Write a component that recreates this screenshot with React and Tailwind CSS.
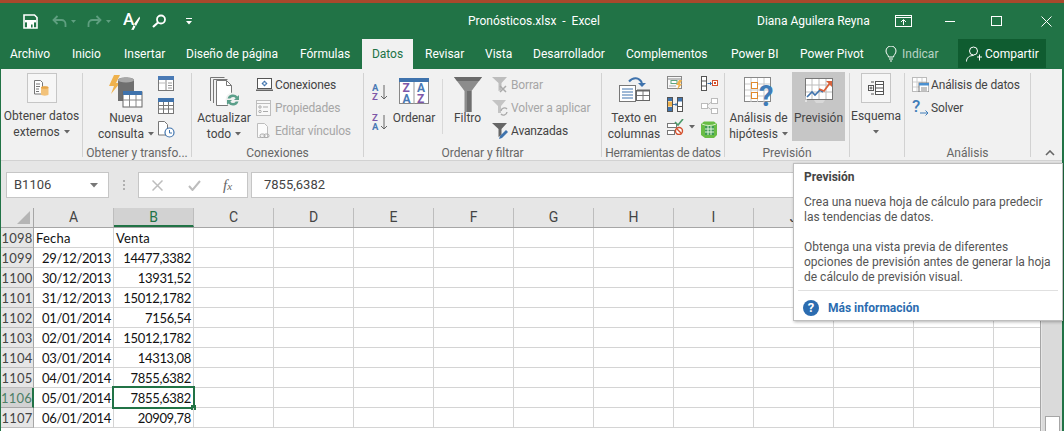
import React from 'react';

const UI = "font-['Roboto',sans-serif]";
const CELL = "font-['Lato',sans-serif]";

function Caret({ className = '' }) {
  return (
    <svg width="6" height="4" viewBox="0 0 6 4" className={`inline-block ${className}`}>
      <path d="M0 0h6L3 3.5z" fill="#666" />
    </svg>
  );
}

/* ---------- title bar icons ---------- */
function SaveIcon() {
  return (
    <svg width="15" height="15" viewBox="0 0 15 15">
      <path d="M1 1h10.5L14 3.5V14H1z" fill="none" stroke="#fff" strokeWidth="1.6" />
      <rect x="2" y="6" width="11" height="2.4" fill="#fff" />
      <rect x="4" y="8" width="7" height="6" fill="#fff" />
      <rect x="8" y="10.5" width="1.6" height="3" fill="#217346" />
    </svg>
  );
}
function UndoIcon({ flip }) {
  return (
    <svg width="15" height="13" viewBox="0 0 15 13" className={flip ? '-scale-x-100' : ''}>
      <path d="M5.5 1 1.5 5l4 4M2 5h7.5a4 4 0 0 1 4 4v3" fill="none" stroke="#5f9f80" strokeWidth="1.8" />
    </svg>
  );
}
function FormatIcon() {
  return (
    <svg width="18" height="20" viewBox="0 0 18 20">
      <text x="0" y="14" fontSize="17" fontWeight="500" fill="#fff" fontFamily="Roboto, sans-serif">A</text>
      <path d="M16.5 5.5 11 13l2 2 4-7.5zM10.5 14l2 1.5-2 3.5-2.5-.5c1.5-1 1.5-2.5 2.5-4.5z" fill="#fff" />
    </svg>
  );
}
function SearchIcon() {
  return (
    <svg width="15" height="14" viewBox="0 0 15 14">
      <circle cx="9" cy="5.5" r="4" fill="none" stroke="#fff" strokeWidth="1.8" />
      <path d="M6 8.5 1 13" stroke="#fff" strokeWidth="2.2" />
    </svg>
  );
}
function CustomizeIcon() {
  return (
    <svg width="6" height="7" viewBox="0 0 6 7">
      <path d="M0 .5h6" stroke="#fff" />
      <path d="M0 3h6L3 6.5z" fill="#fff" />
    </svg>
  );
}
function WindowIcons() {
  return (
    <>
      <svg width="17" height="12" viewBox="0 0 17 12" className="ml-[26px]">
        <rect x=".5" y=".5" width="16" height="11" fill="none" stroke="#fff" />
        <path d="M0 2.5h17" stroke="#fff" />
        <path d="M8.5 10V5M6 7l2.5-2.5L11 7" fill="none" stroke="#fff" />
      </svg>
      <div className="ml-[33px] w-[10px] h-[1px] bg-white" />
      <div className="ml-[36px] w-[11px] h-[10px] border border-white" />
      <svg width="11" height="11" viewBox="0 0 11 11" className="ml-[39px]">
        <path d="M.5.5l10 10M10.5.5l-10 10" stroke="#fff" fill="none" />
      </svg>
    </>
  );
}

/* ---------- ribbon icons ---------- */
function OpenDataIcon() {
  return (
    <svg width="15" height="16" viewBox="0 0 15 16">
      <path d="M.5.5h6l2 2V14H.5z" fill="#fff" stroke="#777" />
      <path d="M2 4h4M2 6.5h4M2 9h3M2 11.5h3" stroke="#777" />
      <path d="M7 7.5c0-1.5 7.5-1.5 7.5 0v7c0 1.5-7.5 1.5-7.5 0z" fill="#f2c27a" />
      <ellipse cx="10.75" cy="7.5" rx="3.75" ry="1.3" fill="#e6a64a" />
    </svg>
  );
}
function QueryIcon() {
  return (
    <svg width="34" height="33" viewBox="0 0 34 33">
      <path d="M5 0h6L7 8h4L2 19l3-8H0z" fill="#efb24d" />
      <path d="M9 5c0-3.5 16-3.5 16 0v21H9z" fill="#6f6f6f" />
      <ellipse cx="17" cy="5" rx="8" ry="2.6" fill="#a8a8a8" />
      <rect x="14" y="17" width="19" height="15" fill="#fff" stroke="#666" />
      <rect x="14" y="16" width="19" height="4" fill="#3f73ad" />
      <path d="M20.5 20v12M27 20v12M14 25h19" stroke="#888" />
    </svg>
  );
}
function TableA() {
  return (
    <svg width="16" height="15" viewBox="0 0 16 15">
      <rect x=".5" y=".5" width="15" height="14" fill="#fff" stroke="#777" />
      <rect x="0" y="0" width="16" height="4" fill="#4a7ab5" />
      <path d="M8 4v10" stroke="#888" />
      <path d="M10 7h4M10 9.5h4M10 12h4" stroke="#999" />
      <path d="M1 7h6" stroke="#bbb" />
    </svg>
  );
}
function TableB() {
  return (
    <svg width="16" height="16" viewBox="0 0 16 16">
      <rect x=".5" y=".5" width="15" height="15" fill="#fff" stroke="#777" />
      <rect x="0" y="0" width="16" height="4" fill="#3f73ad" />
      <path d="M5.5 4v11M10.5 4v11M1 7.5h14M1 11h14" stroke="#777" />
    </svg>
  );
}
function RecentIcon() {
  return (
    <svg width="17" height="17" viewBox="0 0 17 17">
      <path d="M.5.5h6l3 3V14H.5z" fill="#fff" stroke="#777" />
      <circle cx="11.5" cy="11.5" r="4.5" fill="#fff" stroke="#3f73ad" strokeWidth="1.2" />
      <path d="M11.5 9v3h2.5" fill="none" stroke="#3f73ad" />
    </svg>
  );
}
function RefreshAllIcon() {
  return (
    <svg width="31" height="31" viewBox="0 0 31 31">
      <path d="M.5 24V.5h14" fill="none" stroke="#777" />
      <path d="M3.5 26V2.5h14" fill="none" stroke="#777" />
      <path d="M6.5 28.5v-25h10l5 5v20z" fill="#fff" stroke="#777" />
      <path d="M16.5 3.5v5h5" fill="none" stroke="#777" />
      <circle cx="23" cy="23" r="7.5" fill="#f1f1f1" />
      <path d="M17.5 21.5a5.8 5.8 0 0 1 10-2l1.5-1.5v5h-5l1.7-1.7a3.2 3.2 0 0 0-5.4.2zM28.5 24.5a5.8 5.8 0 0 1-10 2l-1.5 1.5v-5h5l-1.7 1.7a3.2 3.2 0 0 0 5.4-.2z" fill="#5b9f8a" />
    </svg>
  );
}
function ConnIcon() {
  return (
    <svg width="17" height="14" viewBox="0 0 17 14">
      <rect x="1.5" y=".5" width="14" height="10" fill="#fff" stroke="#555" />
      <path d="M0 11.5h17v1.5H0z" fill="#666" />
      <path d="M8.5 2.5l3 3-3 3-3-3z" fill="#3f73ad" />
      <rect x="7.5" y="4.5" width="2" height="2" fill="#fff" />
    </svg>
  );
}
function PropsIcon() {
  return (
    <svg width="15" height="16" viewBox="0 0 15 16">
      <rect x=".5" y=".5" width="14" height="15" fill="#f8f8f8" stroke="#bdbdbd" />
      <path d="M1 3.5h13" stroke="#bdbdbd" />
      <circle cx="4" cy="7" r="1.2" fill="none" stroke="#aaa" />
      <circle cx="4" cy="11.5" r="1.2" fill="none" stroke="#aaa" />
      <path d="M7 7h5M7 11.5h5" stroke="#aaa" />
    </svg>
  );
}
function LinksIcon() {
  return (
    <svg width="15" height="16" viewBox="0 0 15 16">
      <path d="M1.5.5h7l3 3v11h-10z" fill="#fbfbfb" stroke="#bdbdbd" />
      <rect x="4" y="11" width="5" height="3.5" rx="1.7" fill="#f1f1f1" stroke="#aaa" />
      <rect x="8" y="11" width="5" height="3.5" rx="1.7" fill="none" stroke="#aaa" />
    </svg>
  );
}
function SortAZ({ down }) {
  const top = down ? 'Z' : 'A';
  const bottom = down ? 'A' : 'Z';
  return (
    <svg width="16" height="18" viewBox="0 0 16 18">
      <text x="0" y="8" fontSize="9.5" fontWeight="700" fontFamily="Roboto, sans-serif" fill={down ? '#7e57a8' : '#4a7ab5'}>{top}</text>
      <text x="0" y="17" fontSize="9.5" fontWeight="700" fontFamily="Roboto, sans-serif" fill={down ? '#4a7ab5' : '#7e57a8'}>{bottom}</text>
      <path d="M12 2v14M9 13l3 3 3-3" fill="none" stroke="#666" />
    </svg>
  );
}
function SortBigIcon() {
  const t = { fontSize: 12, fontWeight: 700, fontFamily: 'Roboto, sans-serif' };
  return (
    <svg width="30" height="26" viewBox="0 0 30 26">
      <rect x=".5" y=".5" width="29" height="25" fill="#fff" stroke="#888" />
      <rect x="0" y="0" width="30" height="4" fill="#3f73ad" />
      <path d="M15 4v22" stroke="#999" />
      <text x="3.5" y="14" {...t} fill="#7e57a8">Z</text>
      <text x="3.5" y="24.5" {...t} fill="#4a7ab5">A</text>
      <text x="18" y="14" {...t} fill="#4a7ab5">A</text>
      <text x="18" y="24.5" {...t} fill="#7e57a8">Z</text>
    </svg>
  );
}
function FunnelBig() {
  return (
    <svg width="28" height="36" viewBox="0 0 28 36">
      <path d="M0 0h28L17.5 14v21h-7V14z" fill="#8c8c8c" />
      <path d="M0 0h28l-3 4H3z" fill="#6b6b6b" />
      <path d="M13 14v21h4.5V14z" fill="#6e6e6e" />
    </svg>
  );
}
function ClearFilterIcon() {
  return (
    <svg width="16" height="16" viewBox="0 0 16 16">
      <path d="M0 0h15L9.5 6v7l-3 1V6z" fill="#bdbdbd" />
      <path d="M8 9l6 6M14 9l-6 6" stroke="#aaa" strokeWidth="1.5" />
    </svg>
  );
}
function ReapplyIcon() {
  return (
    <svg width="16" height="16" viewBox="0 0 16 16">
      <path d="M0 0h14L9 6v7H6V6z" fill="#c4c4c4" />
      <path d="M9 11a3.5 3.5 0 0 1 6-2M15 12a3.5 3.5 0 0 1-6 2" fill="none" stroke="#aaa" strokeWidth="1.4" />
    </svg>
  );
}
function AdvancedIcon() {
  return (
    <svg width="16" height="16" viewBox="0 0 16 16">
      <path d="M0 0h15L9.5 6v6l-3 2V6z" fill="#666" />
      <path d="M14 7l2 2-6 6-3 1 1-3z" fill="#3f73ad" />
    </svg>
  );
}
function TextColsIcon() {
  return (
    <svg width="31" height="25" viewBox="0 0 31 25">
      <rect x=".5" y="8.5" width="16" height="16" fill="#fff" stroke="#777" />
      <path d="M3 12h11M3 15h11M3 18h11M3 21h11" stroke="#3f73ad" />
      <rect x="17.5" y="13.5" width="13" height="10" fill="#fff" stroke="#666" />
      <path d="M18 13.5h13" stroke="#666" strokeWidth="2" />
      <path d="M24 14v9M18 18.5h12" stroke="#777" />
      <path d="M10 4.5C14 0 20 0 23 6" fill="none" stroke="#3f73ad" strokeWidth="2" />
      <path d="M19 6h8l-4 4z" fill="#3f73ad" />
    </svg>
  );
}
function FlashIcon() {
  return (
    <svg width="16" height="14" viewBox="0 0 16 14">
      <rect x=".5" y=".5" width="14" height="12" fill="#f8f8f8" stroke="#888" />
      <path d="M1 3h13" stroke="#888" />
      <rect x="4" y="4.5" width="6" height="3" fill="#fff" stroke="#5fa57e" />
      <path d="M2 10h7" stroke="#aaa" />
      <path d="M12 4h3l-2 4h2l-5 6 1.5-5H9z" fill="#efb24d" />
    </svg>
  );
}
function DupesIcon() {
  return (
    <svg width="16" height="15" viewBox="0 0 16 15">
      <rect x=".5" y=".5" width="5" height="14" fill="#fff" stroke="#555" />
      <rect x="10.5" y=".5" width="5" height="14" fill="#fff" stroke="#555" />
      <rect x="1" y="1" width="4" height="3" fill="#3f73ad" />
      <rect x="1" y="4.5" width="4" height="5" fill="#efb24d" />
      <rect x="1" y="10" width="4" height="4" fill="#3f73ad" />
      <rect x="11" y="1" width="4" height="3.5" fill="#3f73ad" />
      <path d="M11 9.5h4" stroke="#555" />
      <path d="M6 7.5h4M8.5 6l1.5 1.5L8.5 9" fill="none" stroke="#3f73ad" />
    </svg>
  );
}
function ValidateIcon() {
  return (
    <svg width="17" height="16" viewBox="0 0 17 16">
      <rect x=".5" y="4.5" width="9" height="4" fill="#fff" stroke="#777" />
      <rect x=".5" y="11.5" width="7" height="4" fill="#fff" stroke="#777" />
      <path d="M8 3l3 3 5-6" fill="none" stroke="#4d9a6a" strokeWidth="1.6" />
      <circle cx="12" cy="12" r="3.5" fill="#fff" stroke="#d3502d" strokeWidth="1.4" />
      <path d="M9.8 9.8l4.4 4.4" stroke="#d3502d" strokeWidth="1.4" />
    </svg>
  );
}
function ConsolidateIcon() {
  return (
    <svg width="17" height="15" viewBox="0 0 17 15">
      <rect x=".5" y=".5" width="5" height="14" fill="#fff" stroke="#555" />
      <path d="M1 5h4M1 10h4" stroke="#555" />
      <path d="M6.5 7.5h4M9 6l1.5 1.5L9 9" fill="none" stroke="#3f73ad" />
      <rect x="11.5" y="4.5" width="5" height="5" fill="#fff" stroke="#d3502d" />
      <rect x="13" y="6" width="2" height="2" fill="#d3502d" />
    </svg>
  );
}
function RelationsIcon() {
  return (
    <svg width="17" height="16" viewBox="0 0 17 16">
      <rect x="10.5" y=".5" width="6" height="5" fill="#fff" stroke="#bbb" />
      <rect x=".5" y="5.5" width="6" height="5" fill="#fff" stroke="#bbb" />
      <rect x="10.5" y="10.5" width="6" height="5" fill="#fff" stroke="#bbb" />
      <path d="M6.5 7l4-3M6.5 9l4 3" stroke="#bbb" />
    </svg>
  );
}
function DataModelIcon() {
  return (
    <svg width="16" height="17" viewBox="0 0 16 17">
      <path d="M3 .5h10l3 2.5v11l-3 3H4l-4-3V3z" fill="#69bd45" />
      <path d="M1 3c4 2 10 2 14 0" fill="none" stroke="#d5efc9" />
      <rect x="4" y="5" width="9" height="9" fill="#3f9c55" />
      <path d="M7 5v9M10 5v9M4 8h9M4 11h9" stroke="#e4f5dc" />
    </svg>
  );
}
function WhatIfIcon() {
  return (
    <svg width="31" height="31" viewBox="0 0 31 31">
      <rect x=".5" y=".5" width="26" height="24" fill="#fff" stroke="#888" />
      <path d="M7 1v24M13.5 1v24M20 1v24M1 7h25M1 13h25M1 19h25" stroke="#c9c9c9" />
      <rect x="7.5" y="5.5" width="6" height="6" fill="#fff" stroke="#e08a2e" />
      <rect x="7.5" y="15.5" width="6" height="6" fill="#fff" stroke="#e08a2e" />
      <text x="15" y="28.5" fontSize="29" fontWeight="700" fontFamily="Roboto, sans-serif" fill="#3f7cb8">?</text>
    </svg>
  );
}
function ForecastIcon() {
  return (
    <svg width="28" height="26" viewBox="0 0 28 26">
      <rect x=".5" y=".5" width="27" height="21" fill="#fff" stroke="#777" />
      <path d="M7 1v20M14 1v20M21 1v20M1 7h26M1 14h26" stroke="#bdbdbd" />
      <path d="M1 24v-6" stroke="#fff" />
      <path d="M2 19l5-5 3 3 5-5 3 2" fill="none" stroke="#3f73ad" strokeWidth="1.6" />
      <path d="M14 11l5 2 6-8" fill="none" stroke="#d9623b" strokeWidth="1.8" />
      <path d="M21 3h6v6z" fill="#d9623b" />
      <path d="M9 22l2 3h7l2-3z" fill="#d8d8d8" />
    </svg>
  );
}
function OutlineIcon() {
  return (
    <svg width="16" height="14" viewBox="0 0 16 14">
      <rect x=".5" y="4.5" width="5" height="5" fill="#fff" stroke="#555" />
      <path d="M1.5 7h3M3 5.5v3" stroke="#555" />
      <rect x="7.5" y=".5" width="8" height="13" fill="#fff" stroke="#555" />
      <path d="M7 3.5h8M7 7h8M7 10.5h8" stroke="#555" />
      <path d="M3 1h3M3 13h3" stroke="#555" />
    </svg>
  );
}
function DataAnalysisIcon() {
  return (
    <svg width="17" height="15" viewBox="0 0 17 15">
      <rect x=".5" y=".5" width="14" height="14" fill="#fff" stroke="#bbb" />
      <path d="M5 1v13M10 1v13M1 5h13M1 10h13" stroke="#cfcfcf" />
      <rect x="7" y="6" width="10" height="9" fill="#fff" stroke="#777" />
      <rect x="7" y="6" width="10" height="2.5" fill="#4a90d0" />
      <path d="M9 11h6M9 13h6" stroke="#888" />
    </svg>
  );
}
function SolverIcon() {
  return (
    <svg width="17" height="17" viewBox="0 0 17 17">
      <text x="0" y="13" fontSize="17" fontWeight="500" fontFamily="Roboto, sans-serif" fill="#3f7cb8">?</text>
      <path d="M8 14h8M13.5 11.5 16 14l-2.5 2.5" fill="none" stroke="#3f7cb8" />
    </svg>
  );
}

/* ---------- ribbon pieces ---------- */
function Group({ w, label, children }) {
  return (
    <div className={`${w} h-[84px] flex flex-col border-r border-[#d2d2d2]`}>
      <div className="h-[74px] flex">{children}</div>
      <div className="h-[10px] leading-[12px] text-center text-[12px] text-[#666] whitespace-nowrap">{label}</div>
    </div>
  );
}
function SmallRow({ icon, label, muted }) {
  return (
    <div className="h-[23px] flex items-center tracking-[-0.15px] whitespace-nowrap">
      <div className="w-[19px] flex items-center">{icon}</div>
      <span className={muted ? 'text-[#a6a6a6]' : 'text-[#444]'}>{label}</span>
    </div>
  );
}
function TwoLines({ a, b, caret }) {
  return (
    <div className="leading-[16px] text-center text-[#444] whitespace-nowrap">
      <div>{a}</div>
      <div>{b}{caret && <Caret className="ml-[4px] mb-[2px]" />}</div>
    </div>
  );
}
function BoxedIcon({ children }) {
  return (
    <div className="w-[30px] h-[30px] flex items-center justify-center border border-[#c6c6c6] bg-[#f6f6f6]">
      {children}
    </div>
  );
}

function Ribbon() {
  return (
    <div className={`${UI} text-[12px] h-[92px] pt-[4px] flex bg-[#f1f1f1] border-b border-[#d2d2d2]`}>
      <Group w="w-[82px]" label="">
        <div className="w-full flex flex-col items-center">
          <BoxedIcon><OpenDataIcon /></BoxedIcon>
          <div className="mt-[5px]"><TwoLines a="Obtener datos" b="externos" caret /></div>
        </div>
      </Group>

      <Group w="w-[109px]" label="Obtener y transfo...">
        <div className="w-[72px] ml-[7px] flex flex-col items-center">
          <div className="h-[37px] pt-[2px]"><QueryIcon /></div>
          <TwoLines a="Nueva" b="consulta" caret />
        </div>
        <div className="ml-[-4px] pt-[3px] flex flex-col gap-[7px]">
          <TableA /><TableB /><RecentIcon />
        </div>
      </Group>

      <Group w="w-[172px]" label="Conexiones">
        <div className="w-[60px] ml-[2px] flex flex-col items-center">
          <div className="h-[37px] pt-[4px] pl-[2px]"><RefreshAllIcon /></div>
          <TwoLines a="Actualizar" b="todo" caret />
        </div>
        <div className="ml-[2px]">
          <SmallRow icon={<ConnIcon />} label="Conexiones" />
          <SmallRow icon={<PropsIcon />} label="Propiedades" muted />
          <SmallRow icon={<LinksIcon />} label="Editar vínculos" muted />
        </div>
      </Group>

      <Group w="w-[238px]" label="Ordenar y filtrar">
        <div className="w-[25px] pl-[8px] pt-[10px] flex flex-col gap-[12px]">
          <SortAZ /><SortAZ down />
        </div>
        <div className="w-[50px] flex flex-col items-center">
          <div className="h-[37px] pt-[5px]"><SortBigIcon /></div>
          <div className="leading-[16px] text-[#444]">Ordenar</div>
        </div>
        <div className="ml-[3px] mt-[6px] h-[55px] w-[1px] bg-[#d8d8d8]" />
        <div className="w-[49px] flex flex-col items-center">
          <div className="h-[37px] pt-[4px]"><FunnelBig /></div>
          <div className="leading-[16px] text-[#444]">Filtro</div>
        </div>
        <div>
          <SmallRow icon={<ClearFilterIcon />} label="Borrar" muted />
          <SmallRow icon={<ReapplyIcon />} label="Volver a aplicar" muted />
          <SmallRow icon={<AdvancedIcon />} label="Avanzadas" />
        </div>
      </Group>

      <Group w="w-[123px]" label={<span className="tracking-[-0.3px]">Herramientas de datos</span>}>
        <div className="w-[62px] ml-[1px] flex flex-col items-center">
          <div className="h-[37px] pt-[4px]"><TextColsIcon /></div>
          <TwoLines a="Texto en" b="columnas" />
        </div>
        <div className="pl-[2px] pt-[3px] flex flex-col gap-[7px]">
          <FlashIcon /><DupesIcon />
          <div className="flex items-center"><ValidateIcon /><Caret className="ml-[5px]" /></div>
        </div>
        <div className="pl-[6px] pt-[3px] flex flex-col gap-[7px]">
          <ConsolidateIcon /><RelationsIcon /><DataModelIcon />
        </div>
      </Group>

      <Group w="w-[125px]" label="Previsión">
        <div className="w-[67px] flex flex-col items-center">
          <div className="h-[37px] pt-[4px] pl-[2px]"><WhatIfIcon /></div>
          <TwoLines a="Análisis de" b="hipótesis" caret />
        </div>
        <div className="w-[53px] h-[69px] -mt-[1px] flex flex-col items-center bg-[#c6c6c6]">
          <div className="h-[38px] pt-[6px]"><ForecastIcon /></div>
          <div className="leading-[16px] text-[#444]">Previsión</div>
        </div>
      </Group>

      <Group w="w-[55px]" label="">
        <div className="w-full pr-[2px] flex flex-col items-center">
          <BoxedIcon><OutlineIcon /></BoxedIcon>
          <div className="mt-[5px] leading-[16px] text-[#444]">Esquema</div>
          <Caret className="mt-[6px]" />
        </div>
      </Group>

      <Group w="w-[126px]" label="Análisis">
        <div className="pl-[7px]">
          <SmallRow icon={<DataAnalysisIcon />} label="Análisis de datos" />
          <SmallRow icon={<SolverIcon />} label="Solver" />
        </div>
      </Group>

      <div className="flex-1 h-[84px] flex items-end justify-center">
        <svg width="10" height="6" viewBox="0 0 10 6" className="ml-[6px] mb-[1px]">
          <path d="M1 5l4-4 4 4" fill="none" stroke="#666" strokeWidth="1.6" />
        </svg>
      </div>
    </div>
  );
}

function TitleBar() {
  return (
    <div className={`${UI} relative h-[36px] flex items-center text-[12px] text-white bg-[#217346]`}>
      <div className="pl-[22px]"><SaveIcon /></div>
      <div className="ml-[14px]"><UndoIcon /></div>
      <svg width="5" height="3" className="ml-[4px]"><path d="M0 0h5L2.5 3z" fill="#5f9f80" /></svg>
      <div className="ml-[11px]"><UndoIcon flip /></div>
      <svg width="5" height="3" className="ml-[4px]"><path d="M0 0h5L2.5 3z" fill="#5f9f80" /></svg>
      <div className="ml-[12px]"><FormatIcon /></div>
      <div className="ml-[11px]"><SearchIcon /></div>
      <div className="ml-[19px]"><CustomizeIcon /></div>
      <div className="ml-[276px] w-[127px] whitespace-nowrap">Pronósticos.xlsx&nbsp; -&nbsp; Excel</div>
      <div className="ml-[162px] w-[112px] whitespace-nowrap">Diana Aguilera Reyna</div>
      <WindowIcons />
    </div>
  );
}

const TABS = [
  ['Archivo', 'w-[71px] pl-[9px]'],
  ['Inicio', 'w-[52px]'],
  ['Insertar', 'w-[62px]'],
  ['Diseño de página', 'w-[114px]'],
  ['Fórmulas', 'w-[62px]'],
];
const TABS2 = [
  ['Revisar', 'w-[60px]'],
  ['Vista', 'w-[48px]'],
  ['Desarrollador', 'w-[93px]'],
  ['Complementos', 'w-[105px]'],
  ['Power BI', 'w-[69px]'],
  ['Power Pivot', 'w-[85px]'],
];

function TabBar() {
  return (
    <div className={`${UI} h-[30px] flex text-[12px] text-white bg-[#217346]`}>
      {TABS.map(([t, w]) => (
        <div key={t} className={`${w} leading-[30px] whitespace-nowrap`}>{t}</div>
      ))}
      <div className="w-[51px] h-[30px] bg-[#f1f1f1] text-[#217346] text-center leading-[30px]">Datos</div>
      <div className="w-[12px]" />
      {TABS2.map(([t, w]) => (
        <div key={t} className={`${w} leading-[30px] whitespace-nowrap`}>{t}</div>
      ))}
      <div className="w-[73px] flex items-center text-[#b9d3c5]">
        <svg width="12" height="16" viewBox="0 0 12 16" className="mr-[5px]">
          <path d="M3.5 11c0-2-2.5-3-2.5-6a5 5 0 0 1 10 0c0 3-2.5 4-2.5 6zM4 13h4M5 15h2" fill="none" stroke="#fff" />
        </svg>
        Indicar
      </div>
      <div className="w-[88px] h-[29px] bg-[#0f5c30] flex items-center pl-[8px]">
        <svg width="16" height="16" viewBox="0 0 16 16" className="mr-[3px]">
          <circle cx="7.5" cy="5" r="4" fill="none" stroke="#fff" />
          <path d="M.5 15.5c0-4 3-6 7-6M11 11h5M13.5 8.5v6" fill="none" stroke="#fff" />
        </svg>
        Compartir
      </div>
    </div>
  );
}

function FormulaBar() {
  return (
    <div className={`${UI} h-[47px] pt-[11px] pl-[5px] flex bg-[#e6e6e6] text-[13px] text-[#444]`}>
      <div className="w-[103px] h-[26px] pl-[7px] pr-[10px] flex items-center justify-between bg-white border border-[#c6c6c6]">
        B1106
        <svg width="8" height="5" viewBox="0 0 8 5"><path d="M0 0h8L4 4.5z" fill="#777" /></svg>
      </div>
      <div className="w-[29px] flex flex-col items-center justify-center gap-[2px] h-[26px]">
        <div className="w-[2px] h-[2px] bg-[#b0b0b0]" />
        <div className="w-[2px] h-[2px] bg-[#b0b0b0]" />
        <div className="w-[2px] h-[2px] bg-[#b0b0b0]" />
      </div>
      <div className="w-[110px] h-[26px] pl-[13px] flex items-center bg-white border border-[#c6c6c6]">
        <svg width="11" height="11" viewBox="0 0 11 11"><path d="M.5.5l10 10M10.5.5l-10 10" stroke="#bdbdbd" strokeWidth="1.5" /></svg>
        <svg width="13" height="11" viewBox="0 0 13 11" className="ml-[25px]"><path d="M1 6l3.5 4L12 1" fill="none" stroke="#bdbdbd" strokeWidth="2" /></svg>
        <span className="ml-[22px] font-['Liberation_Serif',serif] italic text-[15px] text-[#666]">f<span className="text-[11px]">x</span></span>
      </div>
      <div className="ml-[3px] w-[795px] h-[26px] pl-[12px] flex items-center bg-white border border-[#c6c6c6]">7855,6382</div>
    </div>
  );
}

const COLS = ['A', 'B', 'C', 'D', 'E', 'F', 'G', 'H', 'I', 'J', 'K', 'L'];
const ROWS = [
  ['1098', 'Fecha', 'Venta'],
  ['1099', '29/12/2013', '14477,3382'],
  ['1100', '30/12/2013', '13931,52'],
  ['1101', '31/12/2013', '15012,1782'],
  ['1102', '01/01/2014', '7156,54'],
  ['1103', '02/01/2014', '15012,1782'],
  ['1104', '03/01/2014', '14313,08'],
  ['1105', '04/01/2014', '7855,6382'],
  ['1106', '05/01/2014', '7855,6382'],
  ['1107', '06/01/2014', '20909,78'],
];

function Sheet() {
  return (
    <div className="flex-1 flex overflow-hidden">
      <div className="w-[1040px] border-r border-[#a6a6a6]">
        <div className={`${UI} h-[20px] flex text-[14px] text-[#444] bg-[#e6e6e6] border-b border-[#a6a6a6]`}>
          <div className="w-[33px] flex items-end justify-end pr-[3px] pb-[3px] border-r border-[#a6a6a6]">
            <svg width="13" height="13" viewBox="0 0 13 13"><path d="M13 0v13H0z" fill="#b5b5b5" /></svg>
          </div>
          {COLS.map((c) => (
            <div
              key={c}
              className={`w-[80px] leading-[19px] text-center border-r border-[#bdbdbd] ${c === 'B' ? 'bg-[#d2d2d2] text-[#217346] border-b-2 border-b-[#217346]' : ''}`}
            >
              {c}
            </div>
          ))}
        </div>
        {ROWS.map(([n, a, b]) => {
          const selected = n === '1106';
          const head = n === '1098';
          return (
            <div key={n} className={`${CELL} h-[20px] flex text-[13px] leading-[20px] text-[#111] ${head ? 'tracking-[0.2px]' : 'tracking-[-0.3px]'}`}>
              <div className={`w-[33px] text-center text-[13px] tracking-[0.2px] border-r border-b ${selected ? 'bg-[#d2d2d2] text-[#4d7f66] border-r-2 border-r-[#217346] border-b-[#a6a6a6]' : 'bg-[#e6e6e6] text-[#444] border-r-[#a6a6a6] border-b-[#bdbdbd]'}`}>{n}</div>
              <div className={`w-[80px] border-r border-b border-[#d4d4d4] ${head ? 'text-left pl-[2px]' : 'text-right pr-[2px]'}`}>{a}</div>
              <div className={`relative w-[80px] border-r border-b border-[#d4d4d4] ${head ? 'text-left pl-[2px]' : 'text-right pr-[2px]'}`}>
                {b}
                {selected && (
                  <>
                    <div className="absolute -left-[2px] -top-[2px] w-[83px] h-[23px] border-2 border-[#217346]" />
                    <div className="absolute -right-[3px] -bottom-[3px] w-[5px] h-[5px] bg-[#217346]" />
                  </>
                )}
              </div>
              {COLS.slice(2).map((c) => (
                <div key={c} className="w-[80px] border-r border-b border-[#d4d4d4]" />
              ))}
              <div className="flex-1 border-b border-[#d4d4d4]" />
            </div>
          );
        })}
      </div>
      <div className="flex-1 bg-[#dadada] flex flex-col justify-end items-center border-l border-[#e6e6e6]">
        <div className="w-[15px] h-[15px] bg-white border border-b-0 border-[#a6a6a6]" />
      </div>
    </div>
  );
}

function Tooltip() {
  return (
    <div className={`${UI} absolute left-[793px] top-[163px] w-[270px] h-[158px] bg-white border border-[#bebebe] shadow-[1px_1px_3px_rgba(0,0,0,0.3)] text-[12px] leading-[15px] text-[#555] pt-[6px]`}>
      <div className="pl-[10px] font-bold text-[#444]">Previsión</div>
      <div className="pl-[10px] mt-[10px]">Crea una nueva hoja de cálculo para predecir<br />las tendencias de datos.</div>
      <div className="pl-[10px] mt-[15px]">Obtenga una vista previa de diferentes<br />opciones de previsión antes de generar la hoja<br />de cálculo de previsión visual.</div>
      <div className="mx-[4px] mt-[5px] h-[1px] bg-[#e0e0e0]" />
      <div className="pl-[9px] mt-[9px] flex items-center font-bold text-[#2b6cb0]">
        <div className="w-[16px] h-[16px] rounded-full bg-[#2b6cb0] text-white text-[13px] text-center leading-[16px] mr-[9px]">?</div>
        Más información
      </div>
    </div>
  );
}

export default function App() {
  return (
    <div className="relative w-[1064px] h-[431px] overflow-hidden pt-[3px] bg-[#a8482c]">
      <div className="h-[428px] flex flex-col border-l border-r-2 border-[#217346] bg-white">
        <TitleBar />
        <TabBar />
        <Ribbon />
        <FormulaBar />
        <Sheet />
      </div>
      <Tooltip />
    </div>
  );
}
